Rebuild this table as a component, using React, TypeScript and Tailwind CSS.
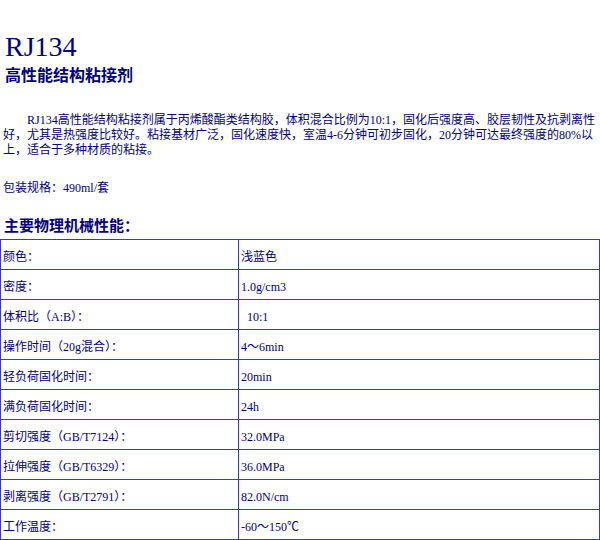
import { Fragment } from "react";

const specs: { label: string; value: string; indent?: boolean }[] = [
  { label: "颜色：", value: "浅蓝色" },
  { label: "密度：", value: "1.0g/cm3" },
  { label: "体积比（A:B）：", value: "10:1", indent: true },
  { label: "操作时间（20g混合）：", value: "4～6min" },
  { label: "轻负荷固化时间：", value: "20min" },
  { label: "满负荷固化时间：", value: "24h" },
  { label: "剪切强度（GB/T7124）：", value: "32.0MPa" },
  { label: "拉伸强度（GB/T6329）：", value: "36.0MPa" },
  { label: "剥离强度（GB/T2791）：", value: "82.0N/cm" },
  { label: "工作温度：", value: "-60～150℃" },
];

export default function App() {
  return (
    <div className="w-[600px] h-[540px] overflow-hidden bg-white text-[#000080] font-['Liberation_Serif','Noto_Sans_CJK_SC',serif]">
      {/* Header */}
      <div className="pt-[33px] pl-[5px]">
        <h1 className="text-[28px] leading-[28px]">RJ134</h1>
        <h2 className="mt-[5px] text-[16px] leading-[16px] font-bold font-['Noto_Sans_CJK_SC',sans-serif]">
          高性能结构粘接剂
        </h2>
      </div>

      {/* Description */}
      <p className="mt-[31px] pl-[3px] text-[12px] leading-[15px] whitespace-nowrap">
        <span className="pl-[24px]">RJ134高性能结构粘接剂属于丙烯酸酯类结构胶，体积混合比例为10:1，固化后强度高、胶层韧性及抗剥离性</span>
        <br />
        好，尤其是热强度比较好。粘接基材广泛，固化速度快，室温4-6分钟可初步固化，20分钟可达最终强度的80%以
        <br />
        上，适合于多种材质的粘接。
      </p>

      <p className="mt-[23px] pl-[3px] text-[12px] leading-[15px]">包装规格：490ml/套</p>

      <h3 className="mt-[21px] pl-[4px] text-[15px] leading-[16px] font-bold font-['Noto_Sans_CJK_SC',sans-serif]">
        主要物理机械性能：
      </h3>

      {/* Spec table: blue background shows through 1px gaps as the grid lines */}
      <div className="mt-[6px] grid grid-cols-[237px_1fr] auto-rows-[29px] gap-px p-px bg-[#3333ff] text-[12px]">
        {specs.map((s) => (
          <Fragment key={s.label}>
            <div className="bg-white pl-[2px] pt-[5px] flex items-center">{s.label}</div>
            <div className={`bg-white pt-[5px] flex items-center ${s.indent ? "pl-[8px]" : "pl-[2px]"}`}>
              {s.value}
            </div>
          </Fragment>
        ))}
      </div>
    </div>
  );
}
